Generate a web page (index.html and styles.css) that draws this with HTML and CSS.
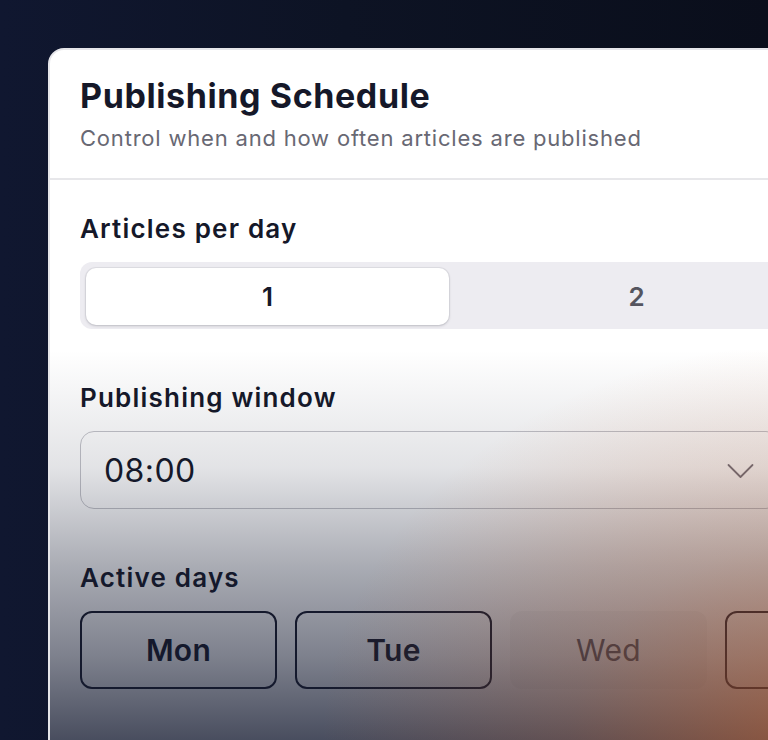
FILE: index.html
```html
<!DOCTYPE html>
<html lang="en">
<head>
<meta charset="utf-8">
<title>Publishing Schedule</title>
<link rel="stylesheet" href="styles.css">
</head>
<body>
<div class="card">
  <header class="card-header">
    <h1 class="title">Publishing Schedule</h1>
    <p class="subtitle">Control when and how often articles are published</p>
  </header>
  <div class="card-body">
    <div class="field">
      <div class="label">Articles per day</div>
      <div class="segmented">
        <div class="segment segment-active">1</div>
        <div class="segment">2</div>
        <div class="segment">3</div>
      </div>
    </div>
    <div class="field">
      <div class="label">Publishing window</div>
      <div class="select">
        <span class="select-value">08:00</span>
        <svg class="chevron" width="28" height="16" viewBox="0 0 28 16" fill="none">
          <path d="M1.5 2 L13.5 14 L25.5 2" stroke="currentColor" stroke-width="1.8" stroke-linecap="round" stroke-linejoin="round"/>
        </svg>
      </div>
    </div>
    <div class="field">
      <div class="label">Active days</div>
      <div class="days">
        <div class="day day-on">Mon</div>
        <div class="day day-on">Tue</div>
        <div class="day">Wed</div>
        <div class="day day-on">Thu</div>
        <div class="day day-on">Fri</div>
      </div>
    </div>
    <div class="field">
      <div class="next-box"></div>
    </div>
  </div>
  <div class="fade"></div>
</div>
</body>
</html>
```

FILE: styles.css
```css
html, body {
  margin: 0;
  height: 100%;
  overflow: hidden;
}
body {
  background: linear-gradient(90deg, #101730 0%, #0d1324 45%, #0a0e1b 100%);
  font-family: Inter, "Noto Sans", sans-serif;
  padding: 48px 0 0 48px;
  box-sizing: border-box;
}
.card {
  position: relative;
  width: 1177px;
  min-height: 900px;
  background: #ffffff;
  border: 2px solid #e6e6ea;
  border-radius: 16px;
  overflow: hidden;
  box-sizing: border-box;
}
.card-header {
  padding: 27px 30px 26px;
  border-bottom: 2px solid #e7e7ea;
}
.title {
  margin: 0;
  font-size: 34px;
  line-height: 37px;
  font-weight: 700;
  color: #151829;
  letter-spacing: 0.6px;
}
.subtitle {
  margin: 10px 0 0;
  font-size: 22px;
  line-height: 28px;
  color: #686873;
  font-weight: 400;
  letter-spacing: 0.8px;
}
.card-body {
  padding: 34px 30px;
  display: flex;
  flex-direction: column;
  gap: 54px;
}
.field {
  display: flex;
  flex-direction: column;
  gap: 18px;
}
.label {
  font-size: 26px;
  line-height: 30px;
  font-weight: 600;
  color: #151829;
  letter-spacing: 1.2px;
}
.segmented {
  display: flex;
  gap: 6px;
  padding: 6px 6px 4px;
  background: #edecf1;
  border-radius: 12px;
}
.segment {
  flex: 0 0 363px;
  height: 57px;
  display: flex;
  align-items: center;
  justify-content: center;
  font-size: 26px;
  font-weight: 600;
  color: #55555f;
  border-radius: 10px;
}
.segment-active {
  background: #ffffff;
  color: #151829;
  box-shadow: 0 1px 3px rgba(20, 20, 40, 0.18), 0 0 0 1px rgba(20, 20, 40, 0.05);
}
.select {
  width: 700px;
  height: 78px;
  box-sizing: border-box;
  border: 1.5px solid #c4c4ca;
  border-radius: 14px;
  display: flex;
  align-items: center;
  justify-content: space-between;
  padding: 0 24px 0 23px;
}
.select-value {
  font-size: 32px;
  font-weight: 400;
  color: #151829;
  letter-spacing: 0.4px;
}
.chevron {
  color: #77737d;
  margin-top: 2px;
}
.days {
  display: flex;
  gap: 18px;
}
.day {
  flex: 0 0 197px;
  height: 78px;
  box-sizing: border-box;
  border-radius: 12px;
  display: flex;
  align-items: center;
  justify-content: center;
  font-size: 30px;
  font-weight: 400;
  color: #555560;
  background: rgba(20, 20, 40, 0.035);
  letter-spacing: 0.3px;
}
.day-on {
  border: 2.5px solid #151829;
  background: transparent;
  color: #151829;
  font-weight: 600;
}
.next-box {
  height: 78px;
  border: 1.5px solid #c4c4ca;
  border-radius: 14px;
}
.fade {
  position: absolute;
  left: 0;
  right: 0;
  top: 300px;
  height: 392px;
  pointer-events: none;
  background:
    radial-gradient(ellipse 500px 400px at 770px 100%, rgba(205, 95, 35, 0.55) 0%, rgba(205, 95, 35, 0.2) 50%, rgba(205, 95, 35, 0) 100%),
    linear-gradient(180deg, rgba(20, 26, 48, 0) 0%, rgba(20, 26, 48, 0.12) 30%, rgba(20, 26, 48, 0.36) 55%, rgba(20, 26, 48, 0.55) 78%, rgba(20, 26, 48, 0.78) 100%);
}
```
